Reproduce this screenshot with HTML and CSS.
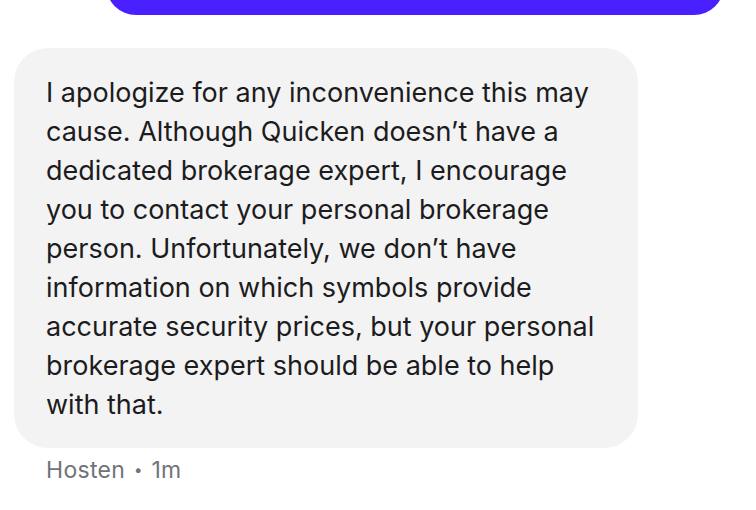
FILE: index.html
```html
<!DOCTYPE html>
<html>
<head>
<meta charset="utf-8">
<link rel="stylesheet" href="styles.css">
</head>
<body>
<div class="thread">
  <div class="user-msg"></div>
  <div class="bot-msg">
    <p class="bot-text">I apologize for any inconvenience this may cause. Although Quicken doesn’t have a dedicated brokerage expert, I encourage you to contact your personal brokerage person. Unfortunately, we don’t have information on which symbols provide accurate security prices, but your personal brokerage expert should be able to help with that.</p>
  </div>
  <div class="meta">Hosten <span class="dot">•</span> 1m</div>
</div>
</body>
</html>
```
FILE: styles.css
```css
html, body {
  margin: 0;
  padding: 0;
  background: #ffffff;
}
.thread {
  display: flex;
  flex-direction: column;
  font-family: Inter, "Noto Sans", sans-serif;
}
.user-msg {
  align-self: flex-start;
  margin-left: 106px;
  width: 618px;
  height: 60px;
  margin-top: -45px;
  background: #4a1fff;
  border-radius: 30px;
}
.bot-msg {
  margin-top: 33px;
  margin-left: 14px;
  width: 624px;
  box-sizing: border-box;
  background: #f3f3f3;
  border-radius: 34px;
  padding: 25px 32px 24px 32px;
}
.bot-text {
  margin: 0;
  font-size: 27px;
  line-height: 39px;
  color: #1c1c1e;
}
.meta {
  margin-left: 46px;
  margin-top: 7px;
  font-size: 23px;
  line-height: 30px;
  letter-spacing: 0.3px;
  color: #707378;
}
.dot {
  font-size: 15px;
  vertical-align: 3px;
  padding: 0 2px;
}
```
